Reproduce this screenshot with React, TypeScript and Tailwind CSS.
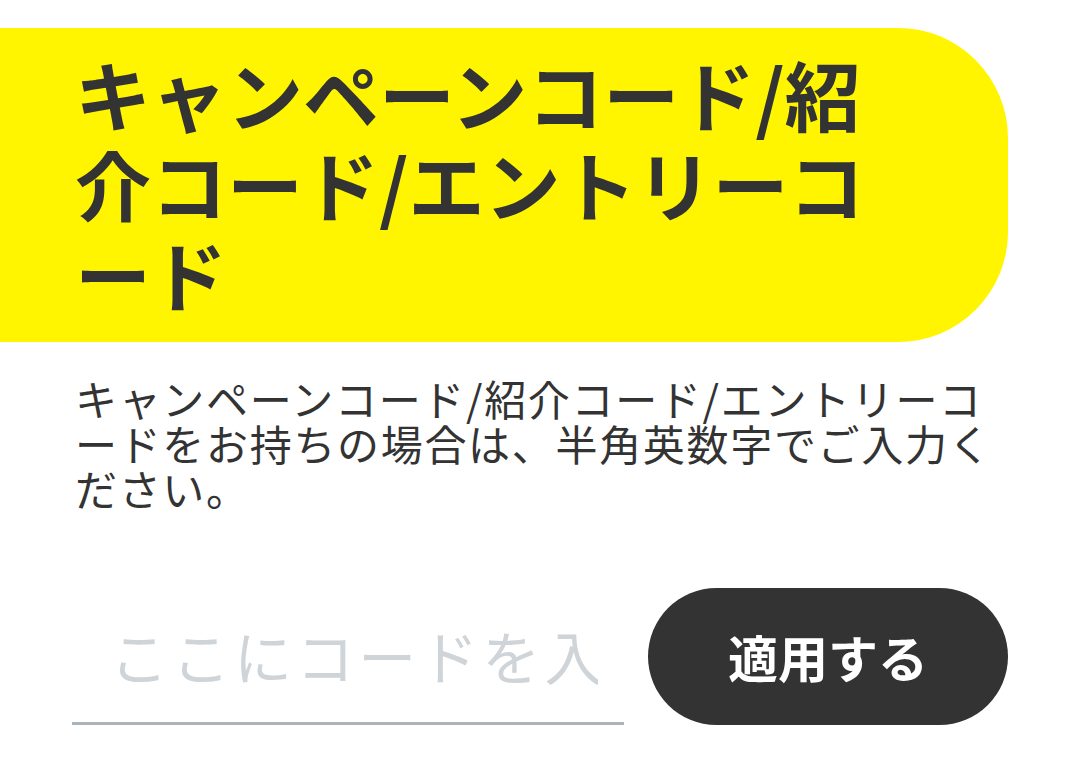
import { useState } from "react";

const FONT = '"Noto Sans CJK JP", "Noto Sans", sans-serif';

export default function App() {
	const [code, setCode] = useState("");

	return (
		<div
			className="min-h-[761px] w-[1080px] bg-white text-[#333333]"
			style={{ fontFamily: FONT }}
		>
			{/* Heading banner */}
			<div className="pt-[28px]">
				<div className="w-[1008px] rounded-r-[110px] bg-[#fff500] pt-[20px] pb-[24px] pl-[75px] pr-[110px]">
					<h1 className="text-[76px] leading-[90px] font-bold">
						キャンペーンコード/紹介コード/エントリーコード
					</h1>
				</div>
			</div>

			<div className="pl-[75px] pr-[72px]">
				<p className="mt-[33px] text-[42px] leading-[45px] tracking-[0.04em]">
					キャンペーンコード/紹介コード/エントリーコードをお持ちの場合は、半角英数字でご入力ください。
				</p>

				<div className="mt-[78px] ml-[-3px] flex items-stretch gap-[24px]">
					<input
						value={code}
						onChange={(e) => setCode(e.target.value)}
						placeholder="ここにコードを入力"
						className="min-w-0 flex-1 border-b-[3px] border-[#abb3bb] bg-transparent pl-[38px] pr-[26px] text-[58px] tracking-[0.07em] text-[#333333] outline-none placeholder:text-[#cfd4d9]"
						style={{ fontFamily: FONT }}
					/>
					<button className="flex h-[137px] w-[360px] shrink-0 items-center justify-center rounded-full bg-[#333333] text-[50px] font-bold text-white">
						適用する
					</button>
				</div>
			</div>
		</div>
	);
}
